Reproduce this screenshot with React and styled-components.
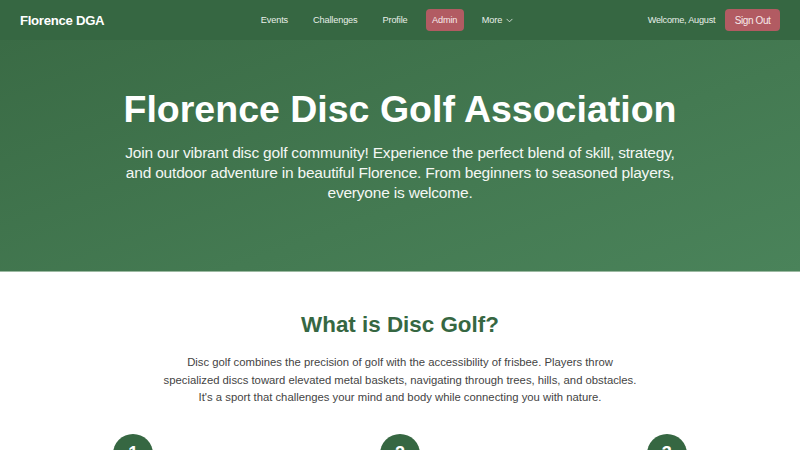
import React from "react";
import styled, { createGlobalStyle } from "styled-components";

const GlobalStyle = createGlobalStyle`
  * { box-sizing: border-box; }
  body {
    margin: 0;
    font-family: "Liberation Sans", Arial, sans-serif;
    background: #ffffff;
  }
`;

const App = () => {
  return (
    <>
      <GlobalStyle />
      <Nav>
        <Logo>Florence DGA</Logo>
        <NavLinks>
          <NavLink>Events</NavLink>
          <NavLink>Challenges</NavLink>
          <NavLink>Profile</NavLink>
          <NavButton>Admin</NavButton>
          <NavLink>
            More
            <svg width="9" height="9" viewBox="0 0 24 24" fill="none" stroke="currentColor" strokeWidth="2.2" strokeLinecap="round" strokeLinejoin="round">
              <path d="M5 8.5l7 7 7-7" />
            </svg>
          </NavLink>
        </NavLinks>
        <UserArea>
          <Welcome>Welcome, August</Welcome>
          <NavButton $large>Sign Out</NavButton>
        </UserArea>
      </Nav>
      <Hero>
        <HeroTitle>Florence Disc Golf Association</HeroTitle>
        <HeroText>
          Join our vibrant disc golf community! Experience the perfect blend of skill, strategy, and outdoor adventure
          in beautiful Florence. From beginners to seasoned players, everyone is welcome.
        </HeroText>
      </Hero>
      <About>
        <AboutTitle>What is Disc Golf?</AboutTitle>
        <AboutText>
          Disc golf combines the precision of golf with the accessibility of frisbee. Players throw specialized discs
          toward elevated metal baskets, navigating through trees, hills, and obstacles. It's a sport that challenges
          your mind and body while connecting you with nature.
        </AboutText>
        <Steps>
          {[1, 2, 3].map((n) => (
            <Step key={n}>
              <StepNumber>{n}</StepNumber>
            </Step>
          ))}
        </Steps>
      </About>
    </>
  );
};

export default App;

const Nav = styled.nav`
  height: 40px;
  background: #366742;
  display: flex;
  align-items: center;
  padding: 0 20px;
`;

const Logo = styled.div`
  flex: 1 1 0;
  color: #ffffff;
  font-size: 13.2px;
  font-weight: 700;
  letter-spacing: -0.3px;
`;

const NavLinks = styled.div`
  display: flex;
  align-items: center;
  margin-right: 25px;
`;

const NavLink = styled.span`
  color: #e8efe8;
  font-size: 9.2px;
  letter-spacing: -0.15px;
  padding: 0 12.5px;
  display: flex;
  align-items: center;
  gap: 3px;
`;

const NavButton = styled.span`
  background: #b25b62;
  color: #f7eaea;
  font-size: ${(p) => (p.$large ? "10px" : "9.2px")};
  letter-spacing: ${(p) => (p.$large ? "-0.4px" : "-0.15px")};
  border-radius: 4px;
  height: 22px;
  padding: 0 ${(p) => (p.$large ? "9.5px" : "6.5px")};
  display: flex;
  align-items: center;
  margin: 0 ${(p) => (p.$large ? "0" : "5.5px")};
`;

const UserArea = styled.div`
  flex: 1 1 0;
  display: flex;
  align-items: center;
  justify-content: flex-end;
  gap: 10px;
`;

const Welcome = styled.span`
  color: #e8efe8;
  font-size: 9.2px;
  letter-spacing: -0.25px;
`;

const Hero = styled.section`
  height: 232px;
  background: linear-gradient(160deg, #3a6b45 0%, #447a52 60%, #4a835a 100%);
  display: flex;
  flex-direction: column;
  align-items: center;
  padding-top: 46px;
  border-bottom: 1px solid #9bb9a1;
`;

const HeroTitle = styled.h1`
  margin: 0;
  color: #ffffff;
  font-size: 37.5px;
  font-weight: 700;
  line-height: 46px;
`;

const HeroText = styled.p`
  margin: 11px 0 0;
  width: 570px;
  color: #f4f7f4;
  font-size: 15.5px;
  letter-spacing: -0.2px;
  line-height: 20px;
  text-align: center;
`;

const About = styled.section`
  display: flex;
  flex-direction: column;
  align-items: center;
  padding-top: 39px;
`;

const AboutTitle = styled.h2`
  margin: 0;
  color: #366742;
  font-size: 22.4px;
  font-weight: 700;
  line-height: 28px;
`;

const AboutText = styled.p`
  margin: 15px 0 0;
  width: 476px;
  color: #444444;
  font-size: 11.3px;
  line-height: 17.5px;
  text-align: center;
`;

const Steps = styled.div`
  width: 100%;
  display: grid;
  grid-template-columns: repeat(3, 1fr);
  margin-top: 27px;
`;

const Step = styled.div`
  display: flex;
  justify-content: center;
`;

const StepNumber = styled.div`
  width: 40px;
  height: 40px;
  border-radius: 50%;
  background: #366742;
  color: #ffffff;
  font-size: 18px;
  font-weight: 700;
  display: flex;
  align-items: center;
  justify-content: center;
`;
